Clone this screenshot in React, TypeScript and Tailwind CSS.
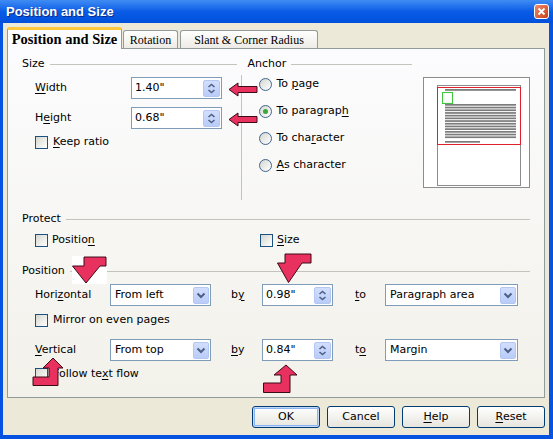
import React from 'react';

function U({ children }: { children: React.ReactNode }) {
  return <span className="underline decoration-1 underline-offset-[2px]">{children}</span>;
}

function Checkbox() {
  return (
    <span className="inline-block h-[13px] w-[13px] shrink-0 border border-[#1C5180] bg-gradient-to-br from-[#D6D6D0] to-white" />
  );
}

function Radio({ checked }: { checked?: boolean }) {
  return (
    <span className="flex h-[13px] w-[13px] shrink-0 items-center justify-center rounded-full border border-[#3E6590] bg-gradient-to-br from-[#D6D6D0] to-white">
      {checked && <span className="h-[5px] w-[5px] rounded-full bg-[#3BA63B]" />}
    </span>
  );
}

function Header({ label }: { label: string }) {
  return (
    <div className="flex h-[14px] items-center">
      <span>{label}</span>
      <span className="ml-[5px] h-px flex-1 bg-[#C4C4BC]" />
    </div>
  );
}

function SpinBtn() {
  return (
    <span className="flex h-[17px] w-[17px] items-center justify-center rounded-[2px] border border-[#B4C7F2] bg-gradient-to-b from-[#D2DEFD] to-[#B9CCF8]">
      <svg width="15" height="15" viewBox="0 0 15 15">
        <path d="M4.5 6 L7.5 3.5 L10.5 6" fill="none" stroke="#4D6185" strokeWidth="1.6" />
        <path d="M4.5 9 L7.5 11.5 L10.5 9" fill="none" stroke="#4D6185" strokeWidth="1.6" />
      </svg>
    </span>
  );
}

function DropBtn() {
  return (
    <span className="flex h-[17px] w-[16px] items-center justify-center rounded-[2px] border border-[#B4C7F2] bg-gradient-to-b from-[#D2DEFD] to-[#B9CCF8]">
      <svg width="14" height="14" viewBox="0 0 14 14">
        <path d="M3.5 5.5 L7 9 L10.5 5.5" fill="none" stroke="#4D6185" strokeWidth="2" />
      </svg>
    </span>
  );
}

function Spin({ value, w }: { value: string; w: string }) {
  return (
    <div className={`flex h-[22px] items-center border border-[#7F9DB9] bg-white pl-[3px] pr-px ${w}`}>
      <span className="flex-1">{value}</span>
      <SpinBtn />
    </div>
  );
}

function Drop({ value, w }: { value: string; w: string }) {
  return (
    <div className={`flex h-[22px] items-center border border-[#7F9DB9] bg-white pl-[4px] pr-px ${w}`}>
      <span className="flex-1">{value}</span>
      <DropBtn />
    </div>
  );
}

function Btn({ children, def }: { children: React.ReactNode; def?: boolean }) {
  return (
    <div
      className={`flex h-[22px] w-[68px] items-center justify-center rounded-[3px] border border-[#003C74] bg-gradient-to-b from-white to-[#E6E5DE] ${
        def ? 'shadow-[inset_0_0_0_1px_#C4D8F8,inset_0_0_0_2px_#8CB4F2]' : ''
      }`}
    >
      {children}
    </div>
  );
}

function Preview() {
  const lines = Array.from({ length: 13 }, (_, i) => 27 + i * 2.7);
  return (
    <svg width="107" height="111" viewBox="0 0 107 111" className="shrink-0">
      <rect x="0.5" y="0.5" width="106" height="110" fill="white" stroke="#8C8C8C" />
      <rect x="14.5" y="8.5" width="83" height="100" fill="white" stroke="#8C8C8C" />
      <rect x="22" y="12" width="71" height="1.8" fill="#7C7C7C" />
      {lines.map((y) => (
        <rect key={y} x="22" y={y} width="71" height="1.7" fill="#7C7C7C" />
      ))}
      <rect x="22" y="64" width="35" height="1.7" fill="#7C7C7C" />
      <rect x="14.5" y="10.5" width="83" height="57" fill="none" stroke="#E0202C" />
      <rect x="19.5" y="15.5" width="10" height="11" fill="none" stroke="#3CC83C" />
    </svg>
  );
}

const fill = '#E8315F';
const edge = '#3B0B16';

function Arrows() {
  return (
    <>
      <svg className="absolute left-[228px] top-[82px]" width="30" height="15" viewBox="0 0 30 15">
        <polygon points="1,7.5 10,1 10,4.5 29,4.5 29,10.5 10,10.5 10,14" fill={fill} stroke={edge} />
      </svg>
      <svg className="absolute left-[228px] top-[112px]" width="30" height="15" viewBox="0 0 30 15">
        <polygon points="1,7.5 10,1 10,4.5 29,4.5 29,10.5 10,10.5 10,14" fill={fill} stroke={edge} />
      </svg>
      <svg className="absolute left-[72px] top-[256px]" width="35" height="28" viewBox="0 0 35 28">
        <rect width="35" height="28" fill="white" />
        <polygon points="12,1 34,1 34,10 28,10 14,27 0.5,10 12,10" fill={fill} stroke={edge} />
      </svg>
      <svg className="absolute left-[277px] top-[253px]" width="35" height="31" viewBox="0 0 35 31">
        <polygon points="8,1 34,1 34,10 25,10 11.5,29.5 0.5,10 8,10" fill={fill} stroke={edge} />
      </svg>
      <svg className="absolute left-[32px] top-[357px]" width="32" height="30" viewBox="0 0 32 30">
        <polygon points="21,1 31,11 26,11 26,28.5 1,28.5 1,20 17,20 17,11 11,11" fill={fill} stroke={edge} />
      </svg>
      <svg className="absolute left-[263px] top-[364px]" width="35" height="30" viewBox="0 0 35 30">
        <polygon points="23,1 34,11 27,11 27,28.5 0.5,28.5 0.5,19 18,19 18,11 11,11" fill={fill} stroke={edge} />
      </svg>
    </>
  );
}

export default function App() {
  return (
    <div className="relative flex h-[439px] w-[553px] flex-col overflow-hidden bg-[#0553E0] font-['DejaVu_Sans',sans-serif] text-[11px] text-black">
      {/* title bar */}
      <div className="flex h-[23px] shrink-0 items-center bg-gradient-to-b from-[#3F8CF3] via-[#0A5BE6] to-[#0050DC] pl-[6px] pr-[4px]">
        <span className="font-['Liberation_Sans',sans-serif] text-[13px] font-bold text-white [text-shadow:1px_1px_0_#0A2A8A]">
          Position and Size
        </span>
        <span className="ml-auto flex h-[15px] w-[15px] items-center justify-center rounded-[3px] border border-white bg-gradient-to-br from-[#EE8A66] to-[#C93D16]">
          <svg width="9" height="9" viewBox="0 0 9 9">
            <path d="M1.5 1.5 L7.5 7.5 M7.5 1.5 L1.5 7.5" stroke="white" strokeWidth="1.8" />
          </svg>
        </span>
      </div>

      <div className="mb-[4px] ml-[3px] mr-[4px] flex flex-1 flex-col bg-[#ECE9D8] pt-[4px]">
        {/* tabs */}
        <div className="flex h-[21px] items-end pl-[4px] font-['Liberation_Serif',serif]">
          <div className="relative z-10 -mb-px flex h-[22px] w-[115px] items-center justify-center rounded-t-[3px] border border-b-0 border-t-[3px] border-[#919B9C] border-t-[#FFC83C] bg-[#FCFCFE] text-[14.5px] font-bold">
            Position and Size
          </div>
          <div className="ml-px flex h-[18px] w-[55px] items-center justify-center rounded-t-[3px] border border-b-0 border-[#919B9C] bg-gradient-to-b from-white to-[#ECEBE6] text-[12px]">
            Rotation
          </div>
          <div className="ml-[2px] flex h-[18px] w-[138px] items-center justify-center rounded-t-[3px] border border-b-0 border-[#919B9C] bg-gradient-to-b from-white to-[#ECEBE6] text-[12px]">
            Slant &amp; Corner Radius
          </div>
        </div>

        {/* page */}
        <div className="ml-[4px] flex h-[350px] w-[538px] flex-col border border-[#919B9C] bg-gradient-to-b from-[#FCFCFE] to-[#F2F1EA] px-[14px]">
          <div className="mt-[8px] flex h-[143px]">
            <div className="flex w-[216px] flex-col">
              <Header label="Size" />
              <div className="mt-[6px] flex h-[22px] items-center">
                <span className="w-[109px] pl-[13px]">
                  <U>W</U>idth
                </span>
                <Spin value={'1.40"'} w="w-[91px]" />
              </div>
              <div className="mt-[8px] flex h-[22px] items-center">
                <span className="w-[109px] pl-[13px]">
                  H<U>e</U>ight
                </span>
                <Spin value={'0.68"'} w="w-[91px]" />
              </div>
              <div className="mt-[7px] flex h-[13px] items-center gap-[5px] pl-[13px]">
                <Checkbox />
                <span>
                  <U>K</U>eep ratio
                </span>
              </div>
            </div>

            <div className="ml-[4px] mt-[18px] h-[125px] w-px bg-[#C4C4BC]" />

            <div className="ml-[5px] flex w-[165px] flex-col">
              <Header label="Anchor" />
              <div className="mt-[6px] flex flex-col gap-[13px] pl-[12px]">
                <div className="flex h-[14px] items-center gap-[4px]">
                  <Radio />
                  <span>
                    To <U>p</U>age
                  </span>
                </div>
                <div className="flex h-[14px] items-center gap-[4px]">
                  <Radio checked />
                  <span>
                    To paragrap<U>h</U>
                  </span>
                </div>
                <div className="flex h-[14px] items-center gap-[4px]">
                  <Radio />
                  <span>
                    To cha<U>r</U>acter
                  </span>
                </div>
                <div className="flex h-[14px] items-center gap-[4px]">
                  <Radio />
                  <span>
                    <U>A</U>s character
                  </span>
                </div>
              </div>
            </div>

            <div className="ml-[11px] mt-[20px]">
              <Preview />
            </div>
          </div>

          <div className="mt-[12px]">
            <Header label="Protect" />
          </div>
          <div className="mt-[8px] flex h-[13px] items-center pl-[13px]">
            <div className="flex w-[225px] items-center gap-[4px]">
              <Checkbox />
              <span>
                Positio<U>n</U>
              </span>
            </div>
            <div className="flex items-center gap-[4px]">
              <Checkbox />
              <span>
                <U>S</U>ize
              </span>
            </div>
          </div>

          <div className="mt-[17px]">
            <Header label="Position" />
          </div>
          <div className="mt-[6px] flex h-[22px] items-center">
            <span className="w-[88px] pl-[13px]">
              Hori<U>z</U>ontal
            </span>
            <Drop value="From left" w="w-[101px]" />
            <span className="ml-[20px] w-[31px]">
              b<U>y</U>
            </span>
            <Spin value={'0.98"'} w="w-[71px]" />
            <span className="ml-[22px] w-[30px]">
              <U>t</U>o
            </span>
            <Drop value="Paragraph area" w="w-[133px]" />
          </div>
          <div className="mt-[8px] flex h-[13px] items-center gap-[5px] pl-[13px]">
            <Checkbox />
            <span>Mirror on even pages</span>
          </div>
          <div className="mt-[12px] flex h-[22px] items-center">
            <span className="w-[88px] pl-[13px]">
              <U>V</U>ertical
            </span>
            <Drop value="From top" w="w-[101px]" />
            <span className="ml-[20px] w-[31px]">
              <U>b</U>y
            </span>
            <Spin value={'0.84"'} w="w-[71px]" />
            <span className="ml-[22px] w-[30px]">
              t<U>o</U>
            </span>
            <Drop value="Margin" w="w-[133px]" />
          </div>
          <div className="mt-[7px] flex h-[13px] items-center gap-[5px] pl-[13px]">
            <Checkbox />
            <span>
              Follow te<U>x</U>t flow
            </span>
          </div>
        </div>

        {/* buttons */}
        <div className="mt-[8px] flex h-[22px] justify-end gap-[7px] pr-[4px]">
          <Btn def>OK</Btn>
          <Btn>Cancel</Btn>
          <Btn>
            <U>H</U>elp
          </Btn>
          <Btn>
            <U>R</U>eset
          </Btn>
        </div>
      </div>

      <Arrows />
    </div>
  );
}
